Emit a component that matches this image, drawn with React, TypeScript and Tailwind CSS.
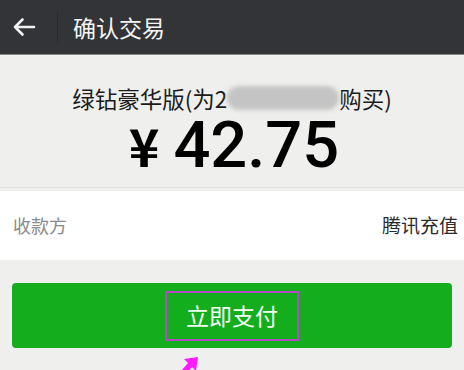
import React from "react";

const App: React.FC = () => {
  return (
    <div
      className="w-[464px] h-[370px] overflow-hidden bg-[#efefed]"
      style={{ fontFamily: '"Noto Sans CJK SC", "Noto Sans", sans-serif' }}
    >
      {/* header */}
      <div className="h-[55px] bg-[#333437] border-b border-[#8a8a8a] flex items-center">
        <div className="w-[57px] h-full flex items-center pl-[12px]">
          <svg width="24" height="20" viewBox="0 0 24 20" fill="none">
            <path
              d="M22 10H3M10.5 2.5L3 10l7.5 7.5"
              stroke="#f2f2f2"
              strokeWidth="2.6"
              strokeLinecap="round"
              strokeLinejoin="round"
            />
          </svg>
        </div>
        <div className="w-px h-[32px] bg-[#2a2a2c]" />
        <div className="pl-[15px] text-[23px] text-[#f4f4f4] leading-none">确认交易</div>
      </div>

      {/* title + price */}
      <div className="flex flex-col items-center pt-[30px] pb-[10px] border-b border-[#e2e2e2]">
        <div className="text-[22.5px] leading-[26px] text-[#1c1c1c] flex items-center">
          <span>绿钻豪华版(为2</span>
          <span className="inline-block w-[112px] h-[24px] rounded-full bg-[#c4c4c4] blur-[2px]" />
          <span>购买)</span>
        </div>
        <div
          className="mt-[2px] ml-[4px] text-[65px] leading-[64px] font-bold text-black flex items-baseline"
          style={{ fontFamily: '"Roboto", "Liberation Sans", sans-serif' }}
        >
          <span className="text-[52px] mr-[14px]" style={{ fontFamily: '"Noto Sans CJK SC", sans-serif' }}>¥</span>
          <span className="font-medium">42.75</span>
        </div>
      </div>

      {/* payee */}
      <div className="mt-[3px] h-[69px] bg-white flex items-center justify-between pl-[13px] pr-[6px]">
        <span className="text-[18px] text-[#8a8a8a]">收款方</span>
        <span className="text-[19px] text-[#2a2a2a]">腾讯充值</span>
      </div>

      {/* pay button */}
      <div className="px-[12px] pt-[23px] relative">
        <button className="w-full h-[65px] rounded-[4px] bg-[#14ad1e] flex items-center justify-center">
          <span className="border-[2px] border-[#b44cc4] w-[134px] h-[50px] flex items-center justify-center text-[23px] text-[#f4fff4]">
            立即支付
          </span>
        </button>
        <svg className="absolute left-[172px] top-[97px]" width="30" height="22" viewBox="0 0 30 22">
          <path d="M26 0L12 2l4 4L2 22h8L20 10l4 4z" fill="#ff1aff" />
        </svg>
      </div>
    </div>
  );
};

export default App;
